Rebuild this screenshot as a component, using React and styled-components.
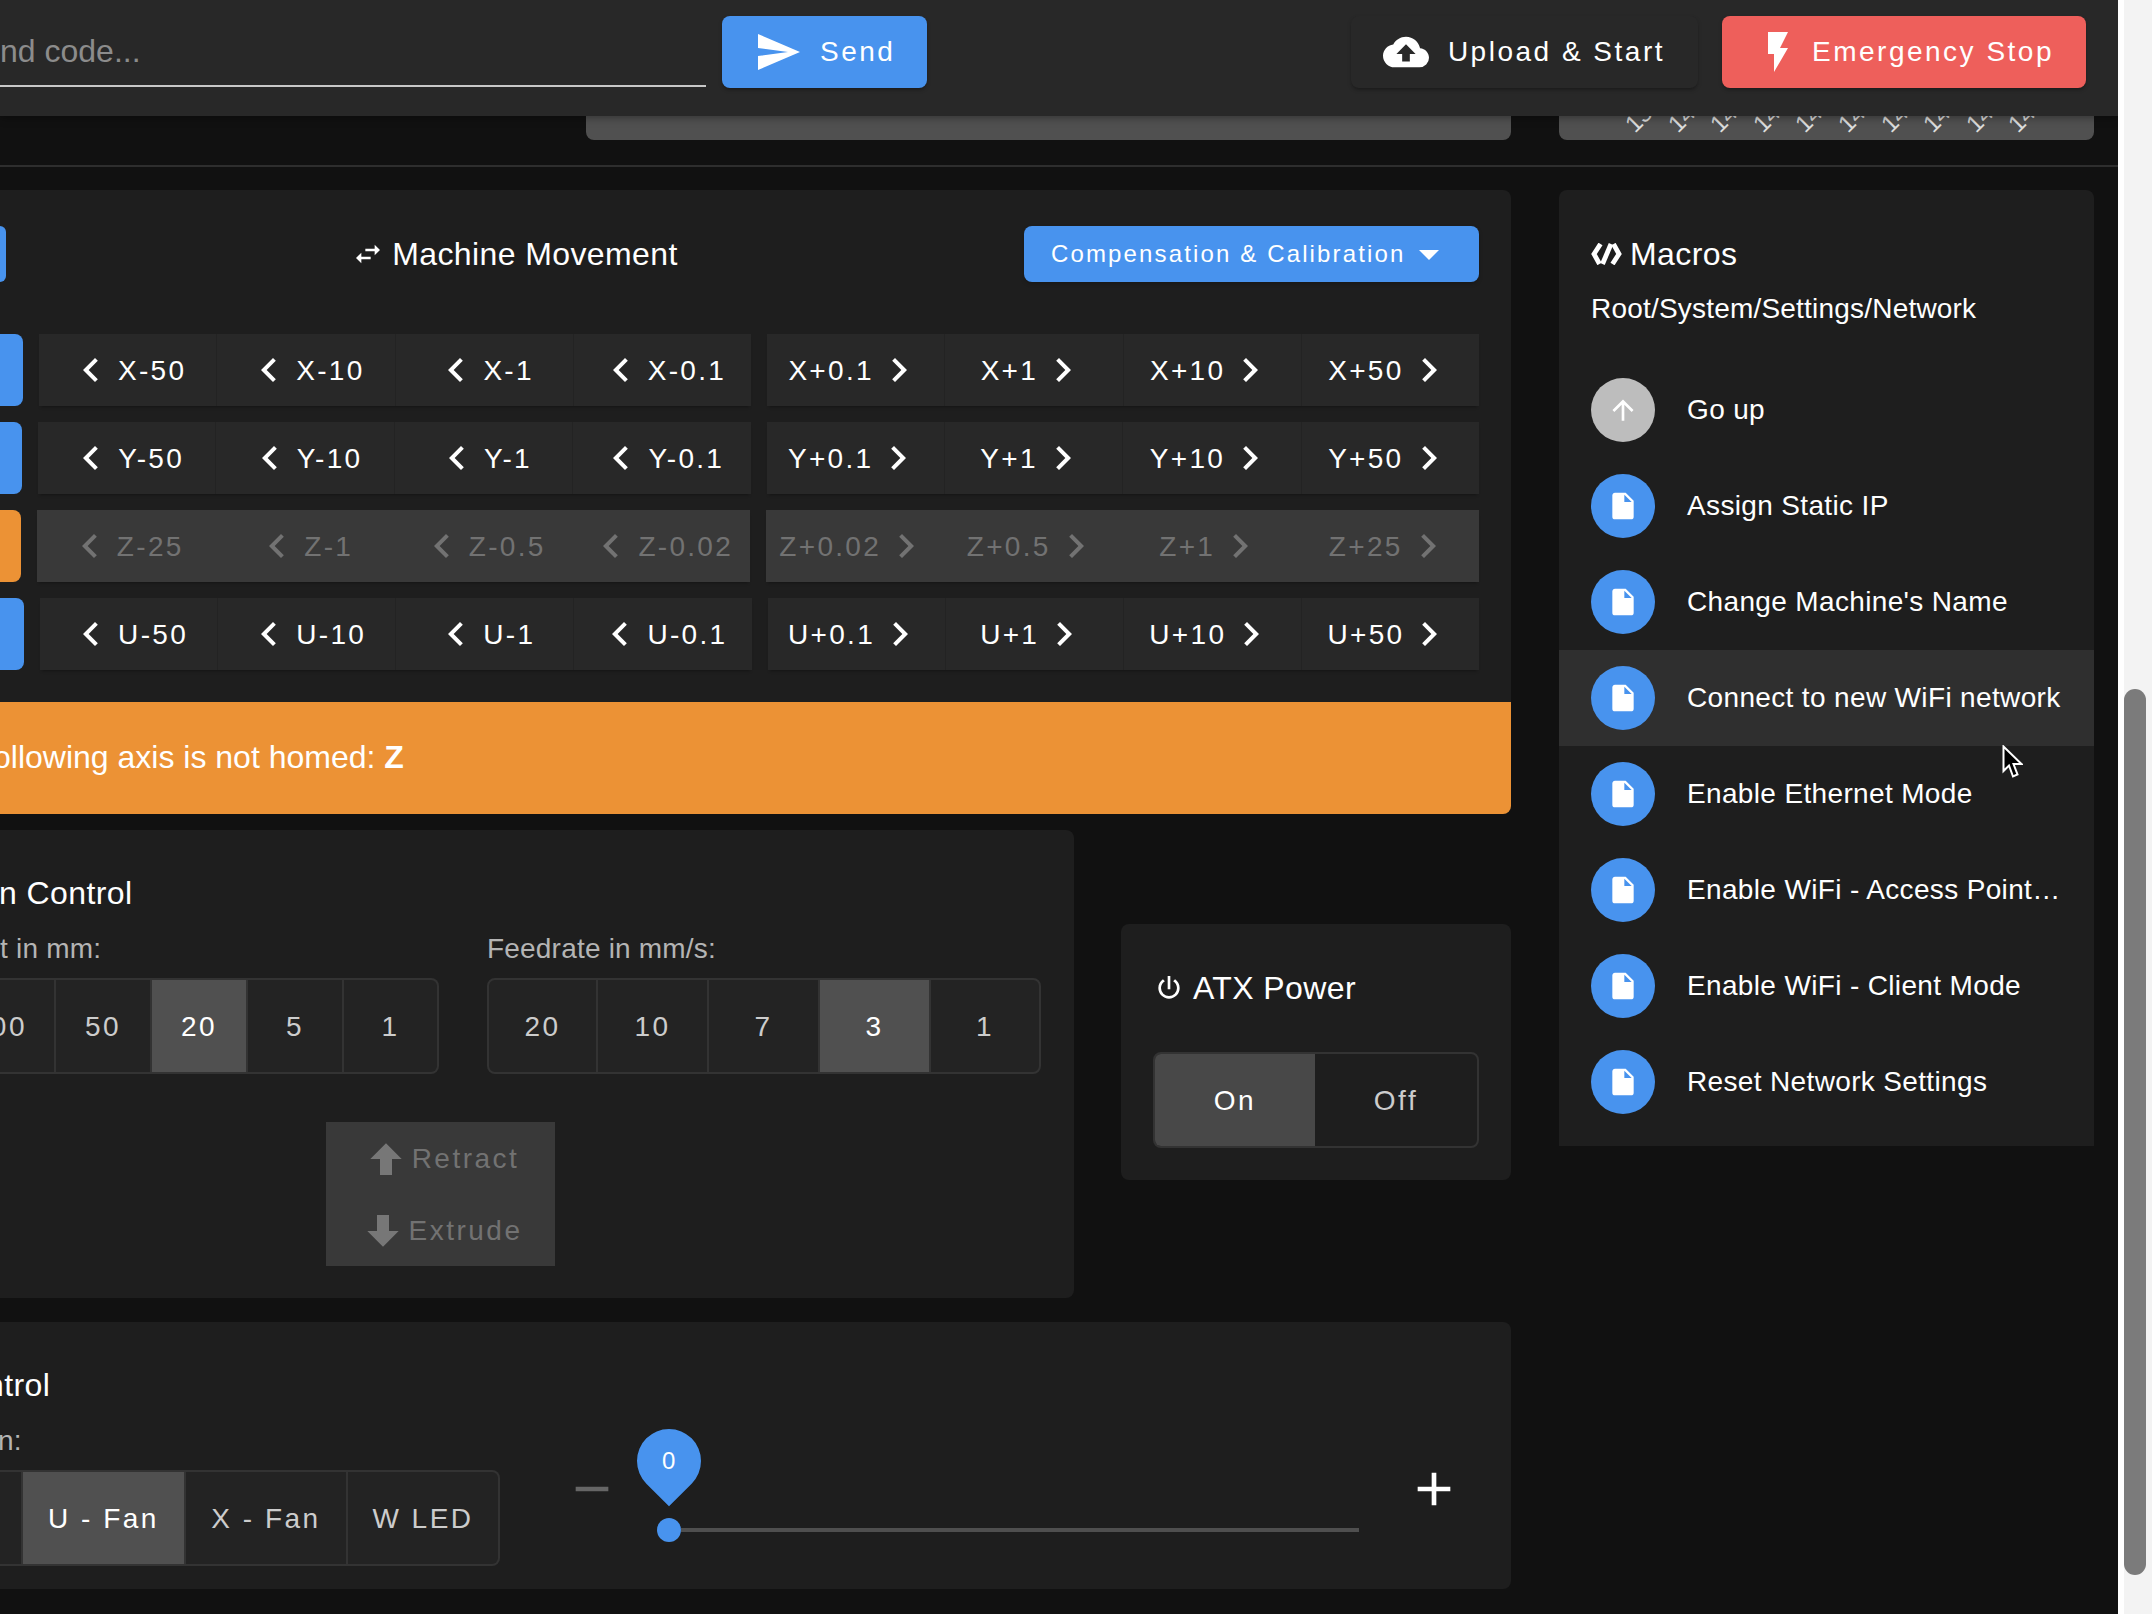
import React from 'react';
import styled, { createGlobalStyle } from 'styled-components';

const BLUE = '#4893ee';
const ORANGE = '#ec9235';

const GlobalStyle = createGlobalStyle`
  html, body {
    margin: 0;
    padding: 0;
    background: #111;
    overflow: hidden;
  }
  * { box-sizing: border-box; }
  body {
    font-family: "Liberation Sans", Arial, sans-serif;
    color: #fff;
  }
`;

function MdiIcon({ d, size = 48, color = 'currentColor' }) {
  return (
    <IconSvg width={size} height={size} viewBox="0 0 24 24" fill={color}>
      <path d={d} />
    </IconSvg>
  );
}

const ICONS = {
  send: 'M2,21L23,12L2,3V10L17,12L2,14V21Z',
  upload: 'M14,13V17H10V13H7L12,8L17,13M19.35,10.03C18.67,6.59 15.64,4 12,4C9.11,4 6.6,5.64 5.35,8.03C2.34,8.36 0,10.9 0,14A6,6 0 0,0 6,20H19A5,5 0 0,0 24,15C24,12.36 21.95,10.22 19.35,10.03Z',
  flash: 'M7,2V13H10V22L17,10H13L17,2H7Z',
  swap: 'M21,9L17,5V8H10V10H17V13M7,11L3,15L7,19V16H14V14H7V11Z',
  left: 'M15.41,16.58L10.83,12L15.41,7.41L14,6L8,12L14,18L15.41,16.58Z',
  right: 'M8.59,16.58L13.17,12L8.59,7.41L10,6L16,12L10,18L8.59,16.58Z',
  menuDown: 'M7,10L12,15L17,10H7Z',
  boldUp: 'M15,20H9V12H4.16L12,4.16L19.84,12H15V20Z',
  boldDown: 'M9,4H15V12H19.84L12,19.84L4.16,12H9V4Z',
  power: 'M16.56,5.44L15.11,6.89C16.84,7.94 18,9.83 18,12A6,6 0 0,1 12,18A6,6 0 0,1 6,12C6,9.83 7.16,7.94 8.88,6.88L7.44,5.44C5.36,6.88 4,9.28 4,12A8,8 0 0,0 12,20A8,8 0 0,0 20,12C20,9.28 18.64,6.88 16.56,5.44M13,3H11V13H13',
  file: 'M13,9V3.5L18.5,9M6,2C4.89,2 4,2.89 4,4V20A2,2 0 0,0 6,22H18A2,2 0 0,0 20,20V8L14,2H6Z',
  up: 'M13,20H11V8L5.5,13.5L4.08,12.08L12,4.16L19.92,12.08L18.5,13.5L13,8V20Z',
  minus: 'M19,13H5V11H19V13Z',
  plus: 'M19,13H13V19H11V13H5V11H11V5H13V11H19V13Z',
};

const AXES = [
  { home: 23, color: BLUE, neg: ['X-50', 'X-10', 'X-1', 'X-0.1'], pos: ['X+0.1', 'X+1', 'X+10', 'X+50'] },
  { home: 22, color: BLUE, neg: ['Y-50', 'Y-10', 'Y-1', 'Y-0.1'], pos: ['Y+0.1', 'Y+1', 'Y+10', 'Y+50'] },
  { home: 21, color: ORANGE, disabled: true, neg: ['Z-25', 'Z-1', 'Z-0.5', 'Z-0.02'], pos: ['Z+0.02', 'Z+0.5', 'Z+1', 'Z+25'] },
  { home: 24, color: BLUE, neg: ['U-50', 'U-10', 'U-1', 'U-0.1'], pos: ['U+0.1', 'U+1', 'U+10', 'U+50'] },
];

const MACROS = [
  'Assign Static IP',
  "Change Machine's Name",
  'Connect to new WiFi network',
  'Enable Ethernet Mode',
  'Enable WiFi - Access Point…',
  'Enable WiFi - Client Mode',
  'Reset Network Settings',
];

const TICKS = ['13', '14', '14', '14', '14', '14', '14', '14', '14', '14'];

function MoveRow({ axis }) {
  return (
    <Row>
      <HomeButton $width={axis.home} $color={axis.color} />
      <MoveGroup>
        {axis.neg.map((label) => (
          <MoveButton key={label} $disabled={axis.disabled}>
            <MdiIcon d={ICONS.left} />
            <MoveLabel $left>{label}</MoveLabel>
          </MoveButton>
        ))}
      </MoveGroup>
      <MoveGroup>
        {axis.pos.map((label) => (
          <MoveButton key={label} $disabled={axis.disabled}>
            <MoveLabel>{label}</MoveLabel>
            <MdiIcon d={ICONS.right} />
          </MoveButton>
        ))}
      </MoveGroup>
    </Row>
  );
}

function MacroItem({ label, up, hover }) {
  return (
    <ListItem $hover={hover}>
      <Avatar $up={up}>
        <MdiIcon d={up ? ICONS.up : ICONS.file} size={32} color="#fff" />
      </Avatar>
      <ItemText>{label}</ItemText>
    </ListItem>
  );
}

export default function App() {
  return (
    <>
      <GlobalStyle />
      <Shell>
        <Page>
          <TopBar>
            <CodeInput>
              <Placeholder>nd code...</Placeholder>
            </CodeInput>
            <BarButton $bg={BLUE} $gap={18}>
              <MdiIcon d={ICONS.send} />
              Send
            </BarButton>
            <BarSpacer />
            <BarButton $bg="#282828" $gap={19} $right={33}>
              <MdiIcon d={ICONS.upload} size={46} />
              Upload &amp; Start
            </BarButton>
            <BarButton $bg="#ee5f5b" $gap={10}>
              <MdiIcon d={ICONS.flash} />
              Emergency Stop
            </BarButton>
          </TopBar>

          <StubRow>
            <StubCard $width={925} />
            <StubCard $width={535}>
              <TickRow>
                {TICKS.map((tick, i) => (
                  <Tick key={i}>{tick}</Tick>
                ))}
              </TickRow>
            </StubCard>
          </StubRow>
          <Divider />

          <Content>
            <LeftColumn>
              <MovementCard>
                <MovementBody>
                  <MovementHeader>
                    <StubHome />
                    <CardTitle>
                      <TitleIcon><MdiIcon d={ICONS.swap} size={32} /></TitleIcon>
                      Machine Movement
                    </CardTitle>
                    <DropdownButton>
                      Compensation &amp; Calibration
                      <MdiIcon d={ICONS.menuDown} />
                    </DropdownButton>
                  </MovementHeader>
                  <Rows>
                    {AXES.map((axis) => (
                      <MoveRow key={axis.neg[0]} axis={axis} />
                    ))}
                  </Rows>
                </MovementBody>
                <Alert>
                  <AlertText>
                    ollowing axis is not homed: <strong>Z</strong>
                  </AlertText>
                </Alert>
              </MovementCard>

              <MiddleRow>
                <ExtrusionCard>
                  <PlainTitle $shift={-1}>n Control</PlainTitle>
                  <ExtrusionGrid>
                    <div>
                      <FieldLabel>t in mm:</FieldLabel>
                      <ToggleGroup $open>
                        <ToggleCell $width={54} $end>00</ToggleCell>
                        <ToggleCell $width={96}>50</ToggleCell>
                        <ToggleCell $width={96} $active>20</ToggleCell>
                        <ToggleCell $width={96}>5</ToggleCell>
                        <ToggleCell $width={95}>1</ToggleCell>
                      </ToggleGroup>
                    </div>
                    <div>
                      <FieldLabel>Feedrate in mm/s:</FieldLabel>
                      <ToggleGroup>
                        <ToggleCell $width={107}>20</ToggleCell>
                        <ToggleCell $width={111}>10</ToggleCell>
                        <ToggleCell $width={111}>7</ToggleCell>
                        <ToggleCell $width={111} $active>3</ToggleCell>
                        <ToggleCell $width={110}>1</ToggleCell>
                      </ToggleGroup>
                    </div>
                  </ExtrusionGrid>
                  <ExtrudeStack>
                    <ExtrudeButton>
                      <MdiIcon d={ICONS.boldUp} color="#777" />
                      Retract
                    </ExtrudeButton>
                    <ExtrudeButton>
                      <MdiIcon d={ICONS.boldDown} color="#777" />
                      Extrude
                    </ExtrudeButton>
                  </ExtrudeStack>
                </ExtrusionCard>

                <AtxCard>
                  <CardTitle>
                    <TitleIcon><MdiIcon d={ICONS.power} size={32} /></TitleIcon>
                    ATX Power
                  </CardTitle>
                  <ToggleGroup $dark>
                    <ToggleCell $width={160} $active $atx>On</ToggleCell>
                    <ToggleCell $width={162} $atx>Off</ToggleCell>
                  </ToggleGroup>
                </AtxCard>
              </MiddleRow>

              <FanCard>
                <FanLeft>
                  <PlainTitle $shift={-14}>ntrol</PlainTitle>
                  <FieldLabel $shift={-2}>n:</FieldLabel>
                  <ToggleGroup $open>
                    <ToggleCell $width={21} />
                    <ToggleCell $width={163} $active>U - Fan</ToggleCell>
                    <ToggleCell $width={162}>X - Fan</ToggleCell>
                    <ToggleCell $width={152}>W LED</ToggleCell>
                  </ToggleGroup>
                </FanLeft>
                <SliderIcon $color="#666" $left={64}>
                  <MdiIcon d={ICONS.minus} size={56} />
                </SliderIcon>
                <Slider>
                  <SliderTrack />
                  <SliderThumb />
                  <ThumbLabel><ThumbValue>0</ThumbValue></ThumbLabel>
                </Slider>
                <SliderIcon $color="#fff" $left={47}>
                  <MdiIcon d={ICONS.plus} size={56} />
                </SliderIcon>
              </FanCard>
            </LeftColumn>

            <MacrosCard>
              <MacrosHead>
                <CardTitle>
                  <MacroGlyph width="31" height="22" viewBox="0 0 31 22" fill="none" stroke="#fff" strokeWidth="4.8">
                    <polyline points="9.5,1 3,11 8.5,21" />
                    <line x1="20" y1="1" x2="11.5" y2="21" />
                    <polyline points="22.5,1 28,11 21.5,21" />
                  </MacroGlyph>
                  Macros
                </CardTitle>
                <Breadcrumb>Root/System/Settings/Network</Breadcrumb>
              </MacrosHead>
              <MacroList>
                <MacroItem label="Go up" up />
                {MACROS.map((label, i) => (
                  <MacroItem key={label} label={label} hover={i === 2} />
                ))}
              </MacroList>
            </MacrosCard>
          </Content>

          <Cursor width="21" height="34" viewBox="0 0 21 34">
            <path d="M1.5,1.5 L1.5,26 L7,20.5 L11,31.5 L15.5,29.5 L11.5,19 L19.5,19 Z" fill="#000" stroke="#fff" strokeWidth="2" />
          </Cursor>
        </Page>

        <Scrollbar>
          <ScrollThumb />
        </Scrollbar>
      </Shell>
    </>
  );
}

const IconSvg = styled.svg`
  flex: none;
  display: block;
`;

const Shell = styled.div`
  display: flex;
  width: 2152px;
  height: 1614px;
  overflow: hidden;
`;

const Page = styled.div`
  position: relative;
  flex: none;
  width: 2118px;
  height: 1614px;
  background: #111;
  overflow: hidden;
`;

const Scrollbar = styled.div`
  flex: none;
  width: 34px;
  padding-top: 689px;
  padding-left: 6px;
  background: #f3f3f3;
  border-left: 6px solid #fff;
`;

const ScrollThumb = styled.div`
  width: 22px;
  height: 886px;
  margin-left: -6px;
  border-radius: 11px;
  background: #7b7b7b;
`;

const TopBar = styled.div`
  position: relative;
  z-index: 2;
  display: flex;
  align-items: flex-start;
  height: 116px;
  padding: 16px 32px 0 0;
  background: #282828;
  box-shadow: 0 2px 8px rgba(0, 0, 0, 0.35);
`;

const CodeInput = styled.div`
  flex: none;
  width: 706px;
  height: 71px;
  padding-top: 16px;
  border-bottom: 2px solid #c8c8c8;
`;

const Placeholder = styled.div`
  font-size: 32px;
  line-height: 38px;
  color: #8c8c8c;
`;

const BarButton = styled.button`
  display: flex;
  align-items: center;
  gap: ${(p) => p.$gap}px;
  height: 72px;
  margin-left: 16px;
  padding: 0 ${(p) => p.$right || 32}px 0 32px;
  border: none;
  border-radius: 8px;
  background: ${(p) => p.$bg};
  color: #fff;
  font-family: inherit;
  font-size: 28px;
  letter-spacing: 2.5px;
  box-shadow: 0 3px 3px -2px rgba(0, 0, 0, 0.2), 0 2px 4px rgba(0, 0, 0, 0.2);

  & + & {
    margin-left: 24px;
  }
`;

const BarSpacer = styled.div`
  flex: 1;
`;

const StubRow = styled.div`
  display: flex;
  gap: 48px;
  height: 24px;
  margin-left: 586px;
`;

const StubCard = styled.div`
  flex: none;
  width: ${(p) => p.$width}px;
  height: 24px;
  border-radius: 0 0 8px 8px;
  background: #505050;
`;

const TickRow = styled.div`
  display: flex;
  padding-left: 64px;
`;

const Tick = styled.div`
  flex: none;
  width: 42.6px;
  margin-top: -16px;
  font-size: 24px;
  line-height: 26px;
  color: #dcdcdc;
  transform: rotate(-45deg);
`;

const Divider = styled.div`
  height: 2px;
  margin-top: 25px;
  background: #2e2e2e;
`;

const Content = styled.div`
  display: flex;
  align-items: flex-start;
  gap: 48px;
  padding-top: 23px;
`;

const LeftColumn = styled.div`
  flex: none;
  width: 1511px;
`;

const MovementCard = styled.div`
  border-radius: 0 8px 8px 0;
  background: #1e1e1e;
  overflow: hidden;
`;

const MovementBody = styled.div`
  padding: 32px 32px 32px 0;
`;

const MovementHeader = styled.div`
  display: flex;
  align-items: center;
  justify-content: space-between;
  height: 64px;
`;

const StubHome = styled.div`
  width: 6px;
  height: 56px;
  border-radius: 0 8px 8px 0;
  background: ${BLUE};
`;

const CardTitle = styled.div`
  display: flex;
  align-items: center;
  height: 64px;
  font-size: 32px;
  letter-spacing: 0.4px;
  white-space: nowrap;
`;

const TitleIcon = styled.span`
  display: block;
  margin-right: 8px;
`;

const DropdownButton = styled.button`
  display: flex;
  align-items: center;
  width: 455px;
  height: 56px;
  padding: 0 0 0 27px;
  border: none;
  border-radius: 8px;
  background: ${BLUE};
  color: #fff;
  font-family: inherit;
  font-size: 24px;
  letter-spacing: 2.14px;
  white-space: nowrap;
  box-shadow: 0 2px 4px rgba(0, 0, 0, 0.2);
`;

const Rows = styled.div`
  display: flex;
  flex-direction: column;
  gap: 16px;
  margin-top: 48px;
`;

const Row = styled.div`
  display: flex;
  gap: 16px;
`;

const HomeButton = styled.div`
  flex: none;
  width: ${(p) => p.$width}px;
  height: 72px;
  border-radius: 0 8px 8px 0;
  background: ${(p) => p.$color};
`;

const MoveGroup = styled.div`
  display: flex;
  flex: 1;
  box-shadow: 0 3px 3px -2px rgba(0, 0, 0, 0.35);
`;

const MoveButton = styled.button`
  display: flex;
  flex: 1;
  align-items: center;
  justify-content: center;
  min-width: 0;
  height: 72px;
  padding: 0;
  border: none;
  border-left: 1px solid ${(p) => (p.$disabled ? '#393939' : '#232323')};
  background: ${(p) => (p.$disabled ? '#393939' : '#282828')};
  color: ${(p) => (p.$disabled ? '#727272' : '#fff')};
  font-family: inherit;
  font-size: 28px;
  letter-spacing: 2.3px;
  white-space: nowrap;

  &:first-child {
    border-left: none;
  }
`;

const MoveLabel = styled.span`
  margin: ${(p) => (p.$left ? '0 2px 0 3px' : '0 1px 0 0')};
  padding-top: 2px;
`;

const Alert = styled.div`
  display: flex;
  align-items: center;
  height: 112px;
  padding-bottom: 2px;
  background: ${ORANGE};
  overflow: hidden;
`;

const AlertText = styled.div`
  margin-left: -7px;
  font-size: 32px;
  white-space: nowrap;
`;

const MiddleRow = styled.div`
  display: flex;
  align-items: flex-start;
  gap: 47px;
  margin-top: 16px;
`;

const ExtrusionCard = styled.div`
  flex: none;
  width: 1074px;
  padding: 32px 33px 32px 0;
  border-radius: 0 8px 8px 0;
  background: #1e1e1e;
  overflow: hidden;
`;

const PlainTitle = styled.div`
  height: 64px;
  margin-left: ${(p) => p.$shift}px;
  font-size: 32px;
  line-height: 62px;
  letter-spacing: 0.4px;
  white-space: nowrap;
`;

const ExtrusionGrid = styled.div`
  display: grid;
  grid-template-columns: 439px 554px;
  gap: 48px;
`;

const FieldLabel = styled.div`
  height: 44px;
  margin: 2px 0 6px ${(p) => p.$shift || 0}px;
  font-size: 28px;
  line-height: 42px;
  letter-spacing: 0.2px;
  color: #b4b4b4;
  white-space: nowrap;
`;

const ToggleGroup = styled.div`
  display: flex;
  height: 96px;
  border: 2px solid #333;
  border-left-width: ${(p) => (p.$open ? 0 : 2)}px;
  border-radius: ${(p) => (p.$open ? '0 8px 8px 0' : '8px')};
  background: ${(p) => (p.$dark ? '#1e1e1e' : '#232323')};
  overflow: hidden;
`;

const ToggleCell = styled.div`
  display: flex;
  flex: none;
  align-items: center;
  justify-content: ${(p) => (p.$end ? 'flex-end' : 'center')};
  width: ${(p) => p.$width}px;
  padding-top: 2px;
  padding-right: ${(p) => (p.$end ? '27px' : '0')};
  border-left: ${(p) => (p.$atx ? 0 : '2px solid #333')};
  background: ${(p) => (p.$active ? (p.$atx ? '#484848' : '#505050') : 'transparent')};
  color: ${(p) => (p.$active ? '#fff' : '#ccc')};
  font-size: 28px;
  letter-spacing: 2.5px;
  white-space: nowrap;

  &:first-child {
    border-left: none;
  }
`;

const ExtrudeStack = styled.div`
  width: 229px;
  margin: 48px 0 0 326px;
  background: #393939;
`;

const ExtrudeButton = styled.div`
  display: flex;
  align-items: center;
  justify-content: center;
  gap: 2px;
  height: 72px;
  padding-top: 1px;
  color: #727272;
  font-size: 28px;
  letter-spacing: 2.5px;
`;

const AtxCard = styled.div`
  flex: none;
  width: 390px;
  margin-top: 94px;
  padding: 32px;
  border-radius: 8px;
  background: #1e1e1e;

  ${ToggleGroup} {
    margin-top: 32px;
  }
`;

const FanCard = styled.div`
  display: flex;
  align-items: flex-start;
  height: 267px;
  margin-top: 24px;
  padding-top: 32px;
  border-radius: 0 8px 8px 0;
  background: #1e1e1e;
  overflow: hidden;
`;

const FanLeft = styled.div`
  flex: none;
  width: 500px;
`;

const SliderIcon = styled.div`
  flex: none;
  margin: 107px 0 0 ${(p) => p.$left}px;
  color: ${(p) => p.$color};
`;

const Slider = styled.div`
  position: relative;
  flex: none;
  width: 702px;
  margin: 174px 0 0 37px;
`;

const SliderTrack = styled.div`
  height: 4px;
  margin-left: 24px;
  background: #4f4f4f;
`;

const SliderThumb = styled.div`
  position: absolute;
  top: -10px;
  left: 0;
  width: 24px;
  height: 24px;
  border-radius: 50%;
  background: ${BLUE};
`;

const ThumbLabel = styled.div`
  position: absolute;
  top: -99px;
  left: -20px;
  display: flex;
  align-items: center;
  justify-content: center;
  width: 64px;
  height: 64px;
  border-radius: 50% 50% 0 50%;
  background: ${BLUE};
  transform: rotate(45deg);
`;

const ThumbValue = styled.span`
  font-size: 24px;
  transform: rotate(-45deg);
`;

const MacrosCard = styled.div`
  flex: none;
  width: 535px;
  padding: 32px 0 16px;
  border-radius: 8px 8px 0 0;
  background: #1e1e1e;
`;

const MacrosHead = styled.div`
  padding: 0 32px;
`;

const MacroGlyph = styled.svg`
  flex: none;
  margin-right: 8px;
`;

const Breadcrumb = styled.div`
  height: 44px;
  margin-bottom: 32px;
  font-size: 28px;
  line-height: 46px;
  letter-spacing: 0.2px;
  white-space: nowrap;
`;

const MacroList = styled.div`
  display: flex;
  flex-direction: column;
`;

const ListItem = styled.div`
  display: flex;
  align-items: center;
  height: 96px;
  padding: 0 32px;
  background: ${(p) => (p.$hover ? '#2f2f2f' : 'transparent')};
`;

const Avatar = styled.div`
  display: flex;
  flex: none;
  align-items: center;
  justify-content: center;
  width: 64px;
  height: 64px;
  margin-right: 32px;
  border-radius: 50%;
  background: ${(p) => (p.$up ? '#bdbdbd' : BLUE)};
`;

const ItemText = styled.div`
  font-size: 28px;
  letter-spacing: 0.35px;
  white-space: nowrap;
`;

const Cursor = styled.svg`
  position: absolute;
  top: 745px;
  left: 2002px;
  z-index: 3;
`;
